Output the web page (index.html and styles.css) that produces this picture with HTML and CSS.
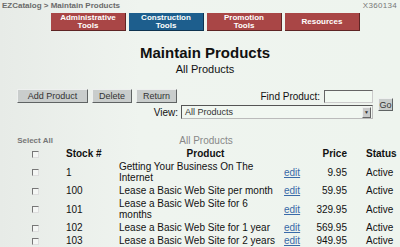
FILE: index.html
```html
<!DOCTYPE html>
<html lang="en">
<head>
    <meta charset="UTF-8">
    <title>EZCatalog - Maintain Products</title>
    <link rel="stylesheet" href="styles.css">
</head>
<body>
    <div class="topbar">
        <span class="crumbs">EZCatalog &gt; Maintain Products</span>
        <span class="account">X360134</span>
    </div>

    <div class="tabs">
        <a class="tab">Administrative<br>Tools</a>
        <a class="tab tab-active">Construction<br>Tools</a>
        <a class="tab">Promotion<br>Tools</a>
        <a class="tab">Resources</a>
    </div>

    <h1>Maintain Products</h1>
    <p class="subtitle">All Products</p>

    <div class="toolbar">
        <div class="toolbar-main">
            <div class="toolbar-row">
                <div class="buttons">
                    <button class="btn btn-wide">Add Product</button>
                    <button class="btn">Delete</button>
                    <button class="btn">Return</button>
                </div>
                <label class="find">Find Product: <input type="text" class="find-input"></label>
            </div>
            <div class="toolbar-row toolbar-row-end">
                <span class="view-label">View:</span>
                <div class="select">
                    <span>All Products</span>
                    <span class="select-arrow">&#9660;</span>
                </div>
            </div>
        </div>
        <button class="btn btn-go">Go</button>
    </div>

    <table class="products">
        <colgroup>
            <col class="col-check">
            <col class="col-stock">
            <col class="col-product">
            <col class="col-edit">
            <col class="col-price">
            <col class="col-status">
        </colgroup>
        <tr class="label-row">
            <td class="select-all">Select All</td>
            <td></td>
            <td class="list-name">All Products</td>
            <td></td><td></td><td></td>
        </tr>
        <tr class="head-row">
            <th><span class="cb"></span></th>
            <th class="left">Stock #</th>
            <th class="product-head">Product</th>
            <th></th>
            <th class="right">Price</th>
            <th class="left">Status</th>
        </tr>
        <tr>
            <td class="center"><span class="cb"></span></td>
            <td>1</td>
            <td>Getting Your Business On The Internet</td>
            <td><a class="edit" href="#">edit</a></td>
            <td class="right">9.95</td>
            <td>Active</td>
        </tr>
        <tr>
            <td class="center"><span class="cb"></span></td>
            <td>100</td>
            <td>Lease a Basic Web Site per month</td>
            <td><a class="edit" href="#">edit</a></td>
            <td class="right">59.95</td>
            <td>Active</td>
        </tr>
        <tr>
            <td class="center"><span class="cb"></span></td>
            <td>101</td>
            <td>Lease a Basic Web Site for 6 months</td>
            <td><a class="edit" href="#">edit</a></td>
            <td class="right">329.95</td>
            <td>Active</td>
        </tr>
        <tr>
            <td class="center"><span class="cb"></span></td>
            <td>102</td>
            <td>Lease a Basic Web Site for 1 year</td>
            <td><a class="edit" href="#">edit</a></td>
            <td class="right">569.95</td>
            <td>Active</td>
        </tr>
        <tr>
            <td class="center"><span class="cb"></span></td>
            <td>103</td>
            <td>Lease a Basic Web Site for 2 years</td>
            <td><a class="edit" href="#">edit</a></td>
            <td class="right">949.95</td>
            <td>Active</td>
        </tr>
    </table>
</body>
</html>
```

FILE: styles.css
```css
body {
    margin: 0;
    font-family: "Liberation Sans", Arial, Helvetica, sans-serif;
    background: linear-gradient(to right, #e7ebe7, #eff4ef 35%, #eef4ee);
    color: #111;
    overflow: hidden;
}
.topbar {
    display: flex;
    justify-content: space-between;
    height: 12px;
    padding: 0 3px 0 2px;
    font-size: 8px;
    line-height: 11px;
    font-weight: bold;
    color: #6a6a6a;
}
.account {
    font-weight: normal;
    color: #777;
    letter-spacing: 0.3px;
}
.tabs {
    display: flex;
    gap: 3px;
    margin: 1px 0 0 51px;
}
.tab {
    box-sizing: border-box;
    width: 75px;
    height: 18px;
    display: flex;
    align-items: center;
    justify-content: center;
    text-align: center;
    background: #a94646;
    border-right: 1px solid #5e2424;
    border-bottom: 1px solid #5e2424;
    color: #fff;
    font-size: 8px;
    line-height: 8px;
    font-weight: bold;
}
.tab-active {
    background: #1d5e8d;
    border-color: #0e3350;
}
h1 {
    margin: 14px 0 0 10px;
    font-size: 15px;
    line-height: 16px;
    text-align: center;
}
.subtitle {
    margin: 2px 0 0 10px;
    font-size: 11px;
    line-height: 12px;
    text-align: center;
}
.toolbar {
    display: flex;
    align-items: center;
    margin: 14px 0 0 17px;
}
.toolbar-main {
    width: 356px;
    display: flex;
    flex-direction: column;
    gap: 2px;
}
.toolbar-row {
    display: flex;
    justify-content: space-between;
    align-items: center;
    height: 14px;
}
.toolbar-row-end {
    justify-content: flex-end;
}
.buttons {
    display: flex;
    gap: 4px;
}
.btn {
    box-sizing: border-box;
    height: 14px;
    padding: 0 6px;
    background: #c9cdcc;
    border: 1px solid;
    border-color: #eef0ef #5f6363 #5f6363 #eef0ef;
    color: #333;
    font-family: inherit;
    font-size: 9px;
    line-height: 12px;
}
.btn-wide {
    width: 71px;
}
.find {
    display: flex;
    align-items: center;
    gap: 4px;
    font-size: 10px;
}
.find-input {
    box-sizing: border-box;
    width: 49px;
    height: 13px;
    margin: 0;
    background: #f2f9f2;
    border: 1px solid;
    border-color: #666 #ccc #ccc #666;
}
.view-label {
    font-size: 10px;
    margin-right: 3px;
}
.select {
    box-sizing: border-box;
    width: 192px;
    height: 14px;
    display: flex;
    justify-content: space-between;
    align-items: center;
    padding: 0 1px 0 3px;
    background: #f1f7f1;
    border: 1px solid;
    border-color: #555 #bbb #bbb #555;
    font-size: 9px;
    color: #333;
}
.select-arrow {
    width: 7px;
    height: 9px;
    background: #c9cbca;
    border: 1px solid;
    border-color: #eee #666 #666 #eee;
    font-size: 5px;
    line-height: 9px;
    text-align: center;
}
.btn-go {
    height: 13px;
    width: 15px;
    padding: 0;
    margin-left: 5px;
}
.products {
    margin: 16px 0 0 17px;
    width: 383px;
    table-layout: fixed;
    border-collapse: collapse;
    font-size: 10px;
    line-height: 11px;
}
.col-check { width: 36px; }
.col-stock { width: 66px; }
.col-product { width: 165px; }
.col-edit { width: 30px; }
.col-price { width: 33px; }
.col-status { width: 53px; }
.products td, .products th {
    padding: 1px 0;
    vertical-align: middle;
}
.products td:nth-child(2), .products th:nth-child(2) {
    padding-left: 13px;
}
.products td:nth-child(3) {
    padding-right: 7px;
}
.products td:nth-child(6), .products th:nth-child(6) {
    padding-left: 19px;
}
.products .product-head {
    padding-left: 8px;
}
.label-row td {
    padding: 0;
    height: 12px;
    line-height: 10px;
}
.select-all {
    font-size: 8px;
    font-weight: bold;
    color: #777;
    text-align: center;
}
.list-name {
    color: #888;
    text-align: center;
    padding-left: 16px !important;
}
.head-row th {
    font-weight: bold;
}
.left { text-align: left; }
.right { text-align: right; }
.center { text-align: center; }
.cb {
    display: inline-block;
    box-sizing: border-box;
    width: 7px;
    height: 7px;
    vertical-align: middle;
    background: #f4f6f4;
    border: 1px solid;
    border-color: #777 #ddd #ddd #777;
}
.edit {
    color: #3a6aa8;
    text-decoration: underline;
}
```
